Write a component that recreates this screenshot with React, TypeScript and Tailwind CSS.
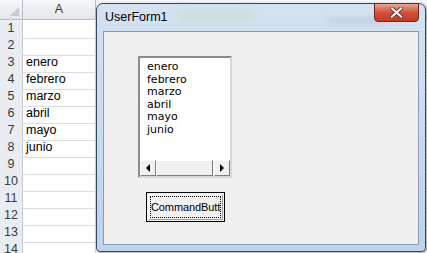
import { useState } from 'react'

const months = ['enero', 'febrero', 'marzo', 'abril', 'mayo', 'junio']
const rows = Array.from({ length: 14 }, (_, i) => i + 1)

function Sheet() {
  return (
    <div
      className="grid w-full h-full bg-white text-[12.5px] text-black"
      style={{ fontFamily: '"Liberation Sans", Arial, sans-serif' }}
    >
      <div className="grid grid-cols-[23px_73px_1fr] h-[19px]">
        <div className="relative border-r border-b border-[#b7bdc6] bg-gradient-to-b from-[#f6f7f9] to-[#e3e7ec]">
          <div className="absolute right-[3px] bottom-[3px] w-0 h-0 border-l-[9px] border-l-transparent border-b-[9px] border-b-[#c8ccd2]" />
        </div>
        <div className="flex items-center justify-center border-r border-b border-[#b7bdc6] bg-gradient-to-b from-[#f6f7f9] to-[#e3e7ec] text-[#333]">
          A
        </div>
        <div className="border-b border-[#b7bdc6] bg-gradient-to-b from-[#f6f7f9] to-[#e3e7ec]" />
      </div>
      {rows.map((r) => (
        <div key={r} className="grid grid-cols-[23px_73px_1fr] h-[17px]">
          <div className="flex items-center justify-center border-r border-b border-[#c5cad2] bg-[#e9edf2] text-[#3a3a3a]">
            {r}
          </div>
          <div className="flex items-center pl-[3px] border-r border-b border-[#d9dde3]">
            {r >= 3 && r <= 8 ? months[r - 3] : ''}
          </div>
          <div className="border-b border-[#d9dde3]" />
        </div>
      ))}
    </div>
  )
}

function ListBox() {
  return (
    <div className="flex flex-col w-[94px] h-[122px] border-2 border-t-[#8c8c8c] border-l-[#8c8c8c] border-b-[#d8d8d8] border-r-[#d8d8d8] bg-white">
      <div className="flex-1 flex flex-col pl-[7px] pt-[3px] leading-[12.5px] text-[11px]">
        {months.map((m) => (
          <div key={m}>{m}</div>
        ))}
      </div>
      <div className="flex h-[16px] bg-[#f0f0f0]">
        <div className="flex items-center justify-center w-[16px] border border-t-white border-l-white border-r-[#808080] border-b-[#808080]">
          <div className="w-0 h-0 border-y-[4px] border-y-transparent border-r-[4px] border-r-black" />
        </div>
        <div className="w-[57px] border border-t-white border-l-white border-r-[#808080] border-b-[#808080]" />
        <div className="flex-1" />
        <div className="flex items-center justify-center w-[16px] border border-t-white border-l-white border-r-[#808080] border-b-[#808080]">
          <div className="w-0 h-0 border-y-[4px] border-y-transparent border-l-[4px] border-l-black" />
        </div>
      </div>
    </div>
  )
}

function CommandButton() {
  const [n, setN] = useState(0)
  return (
    <button
      onClick={() => setN(n + 1)}
      className="ml-[8px] mt-[14px] w-[79px] h-[30px] border border-black bg-[#f0f0f0] p-[1px]"
    >
      <div className="w-full h-full border border-t-white border-l-white border-r-[#a0a0a0] border-b-[#a0a0a0] p-[1px]">
        <div
          className="flex items-center w-full h-full border border-dotted border-black overflow-hidden whitespace-nowrap text-[11px] tracking-[-0.1px]"
          style={{ fontFamily: '"Liberation Sans", Arial, sans-serif' }}
        >
          CommandButt
        </div>
      </div>
    </button>
  )
}

export default function App() {
  return (
    <div className="relative w-[427px] h-[253px] overflow-hidden">
      <Sheet />
      {/* UserForm window */}
      <div
        className="absolute left-[96px] top-[3px] w-[330px] h-[249px] flex flex-col rounded-t-[7px] rounded-b-[4px] border border-[#39475a] bg-gradient-to-b from-[#d4e2f1] via-[#c8dbef] to-[#bcd4ee] shadow-[1px_1px_3px_rgba(0,0,0,0.4)]"
        style={{ fontFamily: 'Tahoma, "DejaVu Sans", "Liberation Sans", sans-serif' }}
      >
        <div className="relative h-[27px] shrink-0 flex items-center pl-[8px] text-[12.5px] text-black">
          <div className="absolute left-[80px] top-[7px] w-[80px] h-[10px] rounded-full bg-[#c8d8b0] opacity-40 blur-[5px]" />
          <div className="absolute left-[230px] top-[14px] w-[60px] h-[5px] rounded-full bg-[#a9b9cc] opacity-50 blur-[3px]" />
          <span className="relative" style={{ fontFamily: '"Liberation Sans", Arial, sans-serif' }}>UserForm1</span>
          <div className="absolute right-[6px] -top-px w-[45px] h-[19px] flex items-center justify-center rounded-b-[4px] border border-[#6b2a22] bg-gradient-to-b from-[#e8a494] via-[#d0513c] to-[#c43b26]">
            <svg width="13" height="11" viewBox="0 0 13 11">
              <path d="M2 1.5 L11 9.5 M11 1.5 L2 9.5" stroke="#4a1a12" strokeWidth="3.6" strokeLinecap="square" />
              <path d="M2 1.5 L11 9.5 M11 1.5 L2 9.5" stroke="#ffffff" strokeWidth="2.2" strokeLinecap="square" />
            </svg>
          </div>
        </div>
        <div className="flex-1 mx-[6px] mb-[6px] border border-[#8a9bb0] bg-[#f0f0f0] text-black">
          <div className="flex flex-col items-start pl-[34px] pt-[24px]">
            <ListBox />
            <CommandButton />
          </div>
        </div>
      </div>
    </div>
  )
}
